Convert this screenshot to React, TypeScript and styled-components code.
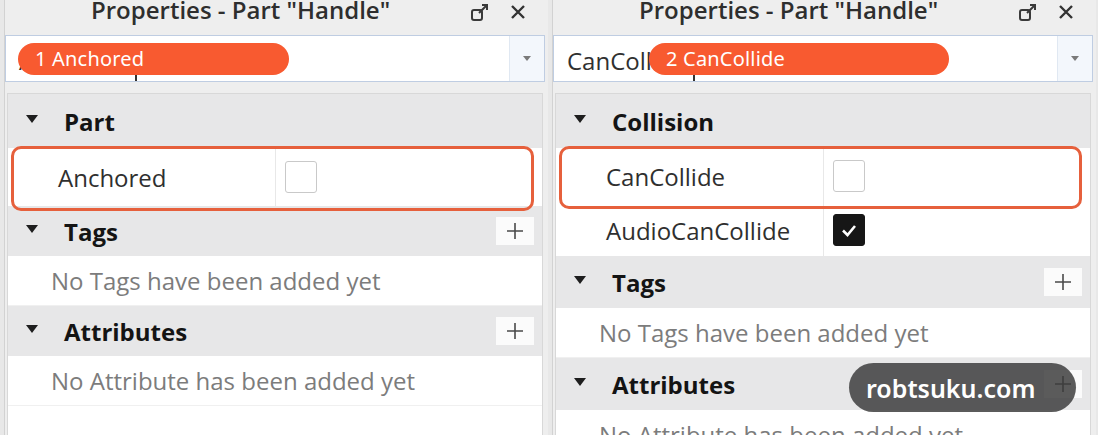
import styled, { createGlobalStyle } from "styled-components";

const GlobalStyle = createGlobalStyle`
  html, body {
    margin: 0;
    padding: 0;
  }
  body {
    width: 1098px;
    height: 435px;
    overflow: hidden;
    background: #e8e8e8;
    font-family: "Open Sans", "Noto Sans", sans-serif;
  }
`;

type Row =
  | { kind: "header"; title: string; add?: boolean; height: number }
  | { kind: "prop"; name: string; checked: boolean; highlight?: boolean; height: number }
  | { kind: "empty"; text: string; height: number };

type PanelData = { search: string; badge: string; badgeLeft: number; badgeWidth: number; rows: Row[] };

const panels: PanelData[] = [
  {
    search: "Anchored",
    badge: "1 Anchored",
    badgeLeft: 12,
    badgeWidth: 271,
    rows: [
      { kind: "header", title: "Part", height: 54 },
      { kind: "prop", name: "Anchored", checked: false, highlight: true, height: 58 },
      { kind: "header", title: "Tags", add: true, height: 50 },
      { kind: "empty", text: "No Tags have been added yet", height: 50 },
      { kind: "header", title: "Attributes", add: true, height: 50 },
      { kind: "empty", text: "No Attribute has been added yet", height: 50 },
    ],
  },
  {
    search: "CanCollide",
    badge: "2 CanCollide",
    badgeLeft: 95,
    badgeWidth: 300,
    rows: [
      { kind: "header", title: "Collision", height: 54 },
      { kind: "prop", name: "CanCollide", checked: false, highlight: true, height: 56 },
      { kind: "prop", name: "AudioCanCollide", checked: true, height: 52 },
      { kind: "header", title: "Tags", add: true, height: 52 },
      { kind: "empty", text: "No Tags have been added yet", height: 50 },
      { kind: "header", title: "Attributes", add: true, height: 52 },
      { kind: "empty", text: "No Attribute has been added yet", height: 50 },
    ],
  },
];

const App = () => {
  return (
    <Page>
      <GlobalStyle />
      {panels.map((p, i) => (
        <Panel key={i}>
          <TitleBar>
            <Title>Properties - Part "Handle"</Title>
            <TitleIcons>
              <svg width="21" height="22" viewBox="0 0 21 22">
                <rect x="2" y="9" width="10" height="10" rx="2" fill="none" stroke="#3a3a3a" strokeWidth="2" />
                <path d="M9 12 L17 4 M12 4 L17 4 L17 9" fill="none" stroke="#3a3a3a" strokeWidth="2" />
              </svg>
              <svg width="16" height="16" viewBox="0 0 16 16">
                <path d="M2 2 L14 14 M14 2 L2 14" stroke="#333" strokeWidth="2.4" />
              </svg>
            </TitleIcons>
          </TitleBar>

          <SearchBox>
            <SearchField>
              <SearchText>{p.search}</SearchText>
              <Caret />
            </SearchField>
            <DropButton>
              <SmallArrow />
            </DropButton>
            <Badge style={{ left: p.badgeLeft, width: p.badgeWidth }}>{p.badge}</Badge>
          </SearchBox>

          <List>
            {p.rows.map((r, j) => {
              if (r.kind === "header") {
                return (
                  <HeaderRow key={j} $height={r.height}>
                    <Toggle />
                    <HeaderTitle>{r.title}</HeaderTitle>
                    {r.add && (
                      <AddButton>
                        <svg width="18" height="18" viewBox="0 0 18 18">
                          <path d="M9 1 V17 M1 9 H17" stroke="#4a4a4a" strokeWidth="1.6" />
                        </svg>
                      </AddButton>
                    )}
                  </HeaderRow>
                );
              }
              if (r.kind === "prop") {
                return (
                  <PropRow key={j} $height={r.height} $highlight={!!r.highlight}>
                    <PropName>{r.name}</PropName>
                    <PropValue>
                      <CheckBox $checked={r.checked}>
                        {r.checked && (
                          <svg width="20" height="20" viewBox="0 0 20 20">
                            <path d="M4 10.5 L8.5 15 L16 6" fill="none" stroke="#fff" strokeWidth="2.6" />
                          </svg>
                        )}
                      </CheckBox>
                    </PropValue>
                  </PropRow>
                );
              }
              return (
                <EmptyRow key={j} $height={r.height}>
                  {r.text}
                </EmptyRow>
              );
            })}
          </List>
        </Panel>
      ))}
      <Watermark>robtsuku.com</Watermark>
    </Page>
  );
};

const Page = styled.div`
  position: relative;
  display: flex;
  gap: 4px;
  padding-left: 4px;
  width: 1098px;
  height: 435px;
  box-sizing: border-box;
  overflow: hidden;
  background: #e8e8e8;
`;

const Panel = styled.div`
  width: 544px;
  height: 100%;
  flex-shrink: 0;
  display: flex;
  flex-direction: column;
  background: #eeeeee;
  border-left: 1px solid #d2d2d2;
  box-sizing: border-box;
  overflow: hidden;
`;

const TitleBar = styled.div`
  height: 35px;
  flex-shrink: 0;
  display: flex;
  align-items: flex-start;
  padding-left: 86px;
  padding-right: 22px;
  overflow: hidden;
`;

const Title = styled.div`
  margin-top: -2px;
  font-size: 24px;
  line-height: 24px;
  font-weight: 600;
  color: #2e2e2e;
  white-space: nowrap;
`;

const TitleIcons = styled.div`
  margin-left: auto;
  display: flex;
  align-items: center;
  gap: 19px;
  height: 24px;
`;

const SearchBox = styled.div`
  position: relative;
  height: 47px;
  flex-shrink: 0;
  margin: 0 3px 11px 0;
  display: flex;
  background: #ffffff;
  border: 1px solid #bfcde2;
  box-sizing: border-box;
`;

const SearchField = styled.div`
  flex: 1;
  display: flex;
  align-items: center;
  padding: 4px 0 0 13px;
`;

const SearchText = styled.span`
  font-size: 24px;
  line-height: 24px;
  color: #303030;
`;

const Caret = styled.span`
  align-self: stretch;
  width: 2px;
  margin: 12px 0 0 7px;
  background: #333;
`;

const DropButton = styled.div`
  width: 34px;
  display: flex;
  align-items: center;
  justify-content: center;
  background: #f3f7fc;
  border-left: 1px solid #e0e8f2;
`;

const SmallArrow = styled.span`
  width: 0;
  height: 0;
  border-left: 4px solid transparent;
  border-right: 4px solid transparent;
  border-top: 5px solid #7a7a7a;
`;

const Badge = styled.div`
  position: absolute;
  top: 7px;
  height: 32px;
  border-radius: 16px;
  background: #f85a30;
  color: #ffffff;
  font-family: "Noto Sans", "Open Sans", sans-serif;
  font-size: 20px;
  line-height: 32px;
  padding-left: 17px;
  box-sizing: border-box;
  letter-spacing: 0.2px;
`;

const List = styled.div`
  flex: 1;
  margin: 0 5px 0 2px;
  background: #ffffff;
  border: 1px solid #d8d8d8;
  border-bottom: none;
  display: flex;
  flex-direction: column;
  overflow: hidden;
`;

const HeaderRow = styled.div<{ $height: number }>`
  height: ${(p) => p.$height}px;
  flex-shrink: 0;
  display: flex;
  align-items: center;
  padding-left: 18px;
  padding-right: 8px;
  background: #e7e7e8;
  box-sizing: border-box;
`;

const Toggle = styled.span`
  width: 0;
  height: 0;
  border-left: 6px solid transparent;
  border-right: 6px solid transparent;
  border-top: 8px solid #1e1e1e;
  margin-right: 26px;
  margin-top: -4px;
`;

const HeaderTitle = styled.span`
  font-size: 24px;
  font-weight: 700;
  color: #141414;
`;

const AddButton = styled.div`
  margin-left: auto;
  width: 38px;
  height: 28px;
  background: #fbfbfb;
  display: flex;
  align-items: center;
  justify-content: center;
`;

const PropRow = styled.div<{ $height: number; $highlight: boolean }>`
  position: relative;
  height: ${(p) => p.$height}px;
  flex-shrink: 0;
  display: flex;
  background: #ffffff;
  &::after {
    content: "";
    display: ${(p) => (p.$highlight ? "block" : "none")};
    position: absolute;
    left: 3px;
    right: 8px;
    top: -2px;
    bottom: -5px;
    border: 3px solid #e6603c;
    border-radius: 10px;
    pointer-events: none;
    z-index: 2;
  }
`;

const PropName = styled.div`
  width: 268px;
  flex-shrink: 0;
  display: flex;
  align-items: center;
  padding-left: 50px;
  box-sizing: border-box;
  border-right: 1px solid #e8e8e8;
  font-size: 24px;
  color: #2f2f2f;
`;

const PropValue = styled.div`
  flex: 1;
  display: flex;
  align-items: center;
  padding-left: 9px;
`;

const CheckBox = styled.div<{ $checked: boolean }>`
  width: 32px;
  height: 32px;
  box-sizing: border-box;
  border-radius: 3px;
  border: 1px solid ${(p) => (p.$checked ? "#161616" : "#c9c9c9")};
  background: ${(p) => (p.$checked ? "#161616" : "#ffffff")};
  display: flex;
  align-items: center;
  justify-content: center;
`;

const EmptyRow = styled.div<{ $height: number }>`
  height: ${(p) => p.$height}px;
  flex-shrink: 0;
  display: flex;
  align-items: center;
  padding-left: 43px;
  box-sizing: border-box;
  border-bottom: 1px solid #f0f0f0;
  font-size: 24px;
  color: #7c7c7c;
`;

const Watermark = styled.div`
  position: absolute;
  right: 22px;
  bottom: 23px;
  width: 227px;
  height: 49px;
  padding-left: 17px;
  box-sizing: border-box;
  border-radius: 25px;
  background: rgba(60, 60, 60, 0.84);
  color: #ffffff;
  font-family: "Noto Sans", "Open Sans", sans-serif;
  font-size: 25px;
  font-weight: 600;
  display: flex;
  align-items: center;
  z-index: 3;
`;

export default App;
